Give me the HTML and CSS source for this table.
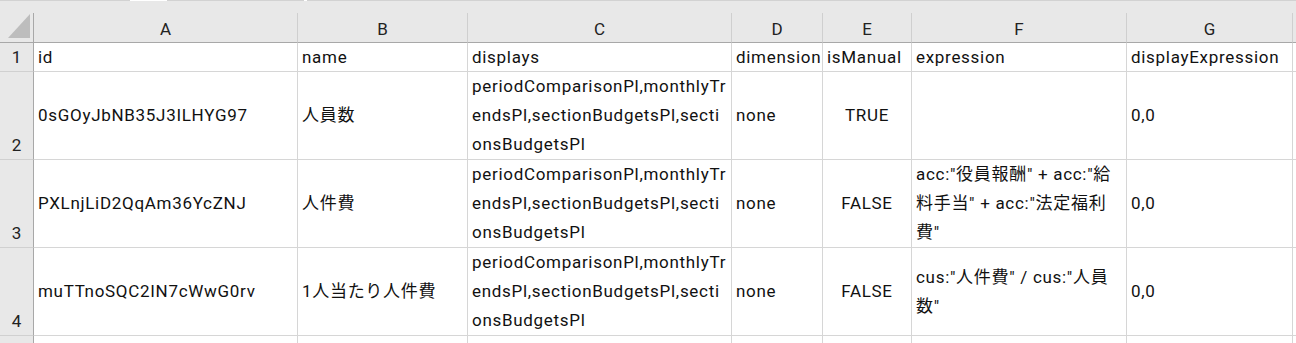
FILE: index.html
```html
<!DOCTYPE html>
<html lang="ja">
<head>
<meta charset="utf-8">
<title>Sheet</title>
<link rel="stylesheet" href="styles.css">
</head>
<body>
<div class="topbar">
  <span class="seg" style="width:130px"></span>
  <span class="gap" style="width:37px"></span>
  <span class="seg" style="width:137px"></span>
  <span class="gap" style="width:3px"></span>
  <span class="seg grow"></span>
</div>
<div class="sheet">
  <div class="corner"><span class="tri"></span></div>
  <div class="colh">A</div>
  <div class="colh">B</div>
  <div class="colh">C</div>
  <div class="colh">D</div>
  <div class="colh">E</div>
  <div class="colh">F</div>
  <div class="colh">G</div>
  <div class="colh last"></div>

  <div class="rowh">1</div>
  <div class="c">id</div>
  <div class="c">name</div>
  <div class="c">displays</div>
  <div class="c">dimension</div>
  <div class="c">isManual</div>
  <div class="c">expression</div>
  <div class="c">displayExpression</div>
  <div class="c"></div>

  <div class="rowh">2</div>
  <div class="c">0sGOyJbNB35J3ILHYG97</div>
  <div class="c">人員数</div>
  <div class="c"><div>periodComparisonPl,monthlyTr<br>endsPl,sectionBudgetsPl,secti<br>onsBudgetsPl</div></div>
  <div class="c">none</div>
  <div class="c mid">TRUE</div>
  <div class="c"></div>
  <div class="c">0,0</div>
  <div class="c"></div>

  <div class="rowh">3</div>
  <div class="c">PXLnjLiD2QqAm36YcZNJ</div>
  <div class="c">人件費</div>
  <div class="c"><div>periodComparisonPl,monthlyTr<br>endsPl,sectionBudgetsPl,secti<br>onsBudgetsPl</div></div>
  <div class="c">none</div>
  <div class="c mid">FALSE</div>
  <div class="c"><div>acc:"役員報酬" + acc:"給<br>料手当" + acc:"法定福利<br>費"</div></div>
  <div class="c">0,0</div>
  <div class="c"></div>

  <div class="rowh">4</div>
  <div class="c">muTTnoSQC2IN7cWwG0rv</div>
  <div class="c">1人当たり人件費</div>
  <div class="c"><div>periodComparisonPl,monthlyTr<br>endsPl,sectionBudgetsPl,secti<br>onsBudgetsPl</div></div>
  <div class="c">none</div>
  <div class="c mid">FALSE</div>
  <div class="c"><div>cus:"人件費" / cus:"人員<br>数"</div></div>
  <div class="c">0,0</div>
  <div class="c"></div>

  <div class="rowh"></div>
  <div class="c"></div>
  <div class="c"></div>
  <div class="c"><div>periodComparisonPl,monthlyTr<br>endsPl,sectionBudgetsPl,secti<br>onsBudgetsPl</div></div>
  <div class="c"></div>
  <div class="c"></div>
  <div class="c"><div>acc:"法定福利費" + acc:"福<br>利厚生費"<br></div></div>
  <div class="c"></div>
  <div class="c"></div>
</div>
</body>
</html>
```
FILE: styles.css
```css
html, body {
  margin: 0;
  padding: 0;
  background: #ffffff;
  overflow: hidden;
}

body {
  width: 1296px;
  height: 343px;
  font-family: Roboto, "Noto Sans CJK JP", sans-serif;
  font-size: 17px;
  color: #111;
}

.topbar {
  height: 13px;
  background: #e8e8e8;
  display: flex;
  align-items: flex-start;
}

.topbar .seg {
  height: 1px;
  background: #d2d2d2;
}

.topbar .gap {
  height: 1px;
  background: #ffffff;
}

.topbar .grow {
  flex: 1;
}

.sheet {
  display: grid;
  grid-template-columns: 34px 264px 170px 264px 91px 89px 215px 166px 1fr;
  grid-template-rows: 30px 29px 88px 88px 88px 88px;
}

.sheet > div {
  box-sizing: border-box;
  min-width: 0;
  overflow: hidden;
}

.corner {
  background: #e8e8e8;
  border-right: 1px solid #a8a8a8;
  border-bottom: 1px solid #a8a8a8;
  display: flex;
  align-items: flex-end;
  justify-content: flex-end;
  padding: 0 3px 4px 0;
}

.tri {
  display: block;
  width: 22px;
  height: 24px;
  background: #bdbdbd;
  clip-path: polygon(100% 0, 100% 100%, 0 100%);
}

.colh {
  background: #e8e8e8;
  border-right: 1px solid #cfcfcf;
  border-bottom: 1px solid #a8a8a8;
  display: flex;
  align-items: center;
  justify-content: center;
  padding-top: 3px;
  font-size: 17px;
  color: #222;
}

.colh.last {
  border-right: none;
}

.rowh {
  background: #e8e8e8;
  border-right: 1px solid #a8a8a8;
  border-bottom: 1px solid #d0d0d0;
  display: flex;
  align-items: flex-end;
  justify-content: center;
  padding-bottom: 4px;
  line-height: 20px;
  color: #222;
}

.c {
  border-right: 1px solid #d6d6d6;
  border-bottom: 1px solid #d6d6d6;
  display: flex;
  align-items: center;
  padding: 0 2px 0 4px;
  white-space: nowrap;
  line-height: 29px;
  letter-spacing: 0.7px;
}

.c.mid {
  justify-content: center;
  padding: 0;
}
```
